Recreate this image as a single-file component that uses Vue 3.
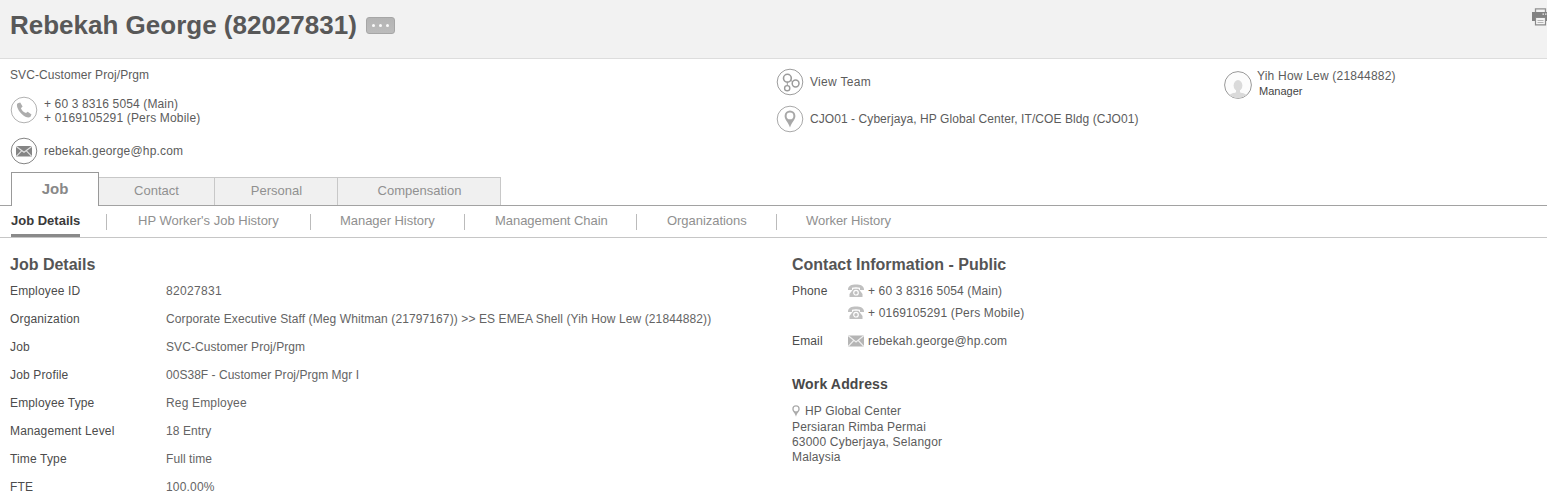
<script setup>
const tabs = [
  { label: 'Job', cls: 'active' },
  { label: 'Contact', cls: 'contact' },
  { label: 'Personal', cls: 'personal' },
  { label: 'Compensation', cls: 'compensation' },
]
const subtabs = [
  { label: 'Job Details', cls: 'current' },
  { label: "HP Worker's Job History", cls: 'st1' },
  { label: 'Manager History', cls: 'st2' },
  { label: 'Management Chain', cls: 'st3' },
  { label: 'Organizations', cls: 'st4' },
  { label: 'Worker History', cls: 'st5' },
]
const details = [
  { label: 'Employee ID', value: '82027831', cls: 'digits' },
  { label: 'Organization', value: 'Corporate Executive Staff (Meg Whitman (21797167)) >> ES EMEA Shell (Yih How Lew (21844882))', cls: 'org' },
  { label: 'Job', value: 'SVC-Customer Proj/Prgm', cls: 'tight' },
  { label: 'Job Profile', value: '00S38F - Customer Proj/Prgm Mgr I', cls: 'profile' },
  { label: 'Employee Type', value: 'Reg Employee', cls: 'mid' },
  { label: 'Management Level', value: '18 Entry', cls: 'tight' },
  { label: 'Time Type', value: 'Full time', cls: 'tight' },
  { label: 'FTE', value: '100.00%', cls: 'mid' },
]
</script>

<template>
  <div class="page">
    <header class="header">
      <h1>Rebekah George (82027831)</h1>
      <button class="more" aria-label="More actions"><i></i><i></i><i></i></button>
      <svg class="print" width="15" height="18" viewBox="0 0 15 18">
        <path d="M3.500 5V.800h10V5" fill="#f2f2f2" stroke="#909090" stroke-width="1.300" />
        <path d="M0 4h15v9H0z" fill="#838383" />
        <path d="M10.500 5.500h1.500v1.300h-1.500zM13 5.500h1.500v1.300H13z" fill="#eee" />
        <path d="M3.500 9.500h10v7.300h-10z" fill="#f5f5f5" stroke="#8a8a8a" stroke-width="1.200" />
        <path d="M5.500 12.500h6M5.500 14.500h6" stroke="#b5b5b5" />
      </svg>
    </header>

    <section class="summary">
      <div class="person">
        <div class="role tight">SVC-Customer Proj/Prgm</div>
        <div class="item phones">
          <svg class="round" width="28" height="28" viewBox="0 0 28 28">
            <circle cx="14" cy="14" r="12.800" fill="#fff" stroke="#b2b2b2" />
            <path d="M7.700 7.200L10.200 6.500L12.600 10.500L10.900 12.200C11.700 14.300 13.600 16.200 16 17L17.700 15.700L21.500 18.400L20.300 20.900C18.500 22 15.300 21.300 12 18.200C8.700 15.300 6.500 10.500 7 8.200Z" fill="#adadad" />
          </svg>
          <div class="lines">
            <div class="phone-main">+ 60 3 8316 5054 (Main)</div>
            <div class="phone-mobile">+ 0169105291 (Pers Mobile)</div>
          </div>
        </div>
        <div class="item mail">
          <svg class="round" width="28" height="28" viewBox="0 0 28 28">
            <circle cx="14" cy="14" r="12.800" fill="#fff" stroke="#858585" />
            <path d="M6 9h16v10.500H6z" fill="#858585" />
            <path d="M6 9.300l8 6 8-6M6.300 19.300l5.300-5.400M21.700 19.300l-5.300-5.400" fill="none" stroke="#e2e2e2" stroke-width="1.100" />
          </svg>
          <div class="email">rebekah.george@hp.com</div>
        </div>
      </div>

      <div class="place">
        <div class="item">
          <svg class="round" width="28" height="28" viewBox="0 0 28 28">
            <circle cx="14" cy="14" r="12.800" fill="#fff" stroke="#9d9d9d" />
            <g fill="none" stroke="#9b9b9b">
              <circle cx="11.400" cy="10.200" r="3.900" stroke-width="1.600" />
              <circle cx="19.600" cy="15.500" r="3.400" stroke-width="1.500" />
              <circle cx="11.200" cy="20.200" r="2.600" stroke-width="1.400" />
              <path d="M14.700 12.400l2 1.300M11.300 14.500v3" />
            </g>
          </svg>
          <div class="view-team">View Team</div>
        </div>
        <div class="item location">
          <svg class="round" width="28" height="28" viewBox="0 0 28 28">
            <circle cx="14" cy="14" r="12.800" fill="#fff" stroke="#a9a9a9" />
            <path fill-rule="evenodd" d="M14 5.500a5.400 5.400 0 0 1 5.400 5.400C19.400 14.500 16 16.500 14 22.500C12 16.500 8.600 14.500 8.600 10.900A5.400 5.400 0 0 1 14 5.500zM14 7.500a3.400 3.400 0 1 0 0 6.800a3.400 3.400 0 0 0 0-6.800z" fill="#a8a8a8" />
          </svg>
          <div class="site">CJO01 - Cyberjaya, HP Global Center, IT/COE Bldg (CJO01)</div>
        </div>
      </div>

      <div class="manager">
        <svg width="28" height="28" viewBox="0 0 28 28">
          <circle cx="14" cy="14" r="13.400" fill="#fcfcfc" stroke="#999" />
          <path d="M5.500 24C8 21.700 11 22 12 21.200h4c1 .8 4 .5 6.500 2.800A13 13 0 0 1 5.500 24z" fill="#dadada" />
          <ellipse cx="14" cy="14.500" rx="4.400" ry="5.400" fill="#dadada" />
          <path d="M12 18h4v4h-4z" fill="#dadada" />
        </svg>
        <div>
          <div class="mgr-name">Yih How Lew (21844882)</div>
          <div class="mgr-role">Manager</div>
        </div>
      </div>
    </section>

    <nav class="tabs">
      <div v-for="t in tabs" :key="t.label" class="tab" :class="t.cls">{{ t.label }}</div>
    </nav>
    <nav class="subtabs">
      <div v-for="s in subtabs" :key="s.label" class="subtab" :class="s.cls"><span>{{ s.label }}</span></div>
    </nav>

    <main class="content">
      <section class="details">
        <h2>Job Details</h2>
        <dl>
          <div v-for="d in details" :key="d.label" class="row">
            <dt>{{ d.label }}</dt>
            <dd><span :class="d.cls">{{ d.value }}</span></dd>
          </div>
        </dl>
      </section>

      <section class="contact-info">
        <h2>Contact Information - Public</h2>
        <div class="cline">
          <span class="clabel">Phone</span>
          <svg width="16" height="14" viewBox="0 0 16 14">
            <path d="M0 5C.3 1.800 3.500.5 8 .5S15.700 1.800 16 5v1h-4V3.800C10 3 6 3 4 3.800V6H0z" fill="#c0c0c0" />
            <path d="M5.500 4.700h5L14.500 10v3h-13v-3z" fill="#c0c0c0" />
            <circle cx="8" cy="8.700" r="2.300" fill="#c0c0c0" stroke="#fff" stroke-width="1.200" />
          </svg>
          <span class="phone-main">+ 60 3 8316 5054 (Main)</span>
        </div>
        <div class="cline">
          <span class="clabel"></span>
          <svg width="16" height="14" viewBox="0 0 16 14">
            <path d="M0 5C.3 1.800 3.500.5 8 .5S15.700 1.800 16 5v1h-4V3.800C10 3 6 3 4 3.800V6H0z" fill="#c0c0c0" />
            <path d="M5.500 4.700h5L14.500 10v3h-13v-3z" fill="#c0c0c0" />
            <circle cx="8" cy="8.700" r="2.300" fill="#c0c0c0" stroke="#fff" stroke-width="1.200" />
          </svg>
          <span class="phone-mobile">+ 0169105291 (Pers Mobile)</span>
        </div>
        <div class="cline cmail">
          <span class="clabel">Email</span>
          <svg width="16" height="14" viewBox="0 0 16 14">
            <path d="M0 1.500h16v11H0z" fill="#b5b5b5" />
            <path d="M0 1.500l8 6.500 8-6.500M0 12.500l5.700-6M16 12.500l-5.700-6" fill="none" stroke="#f0f0f0" stroke-width="1.100" />
          </svg>
          <span class="email">rebekah.george@hp.com</span>
        </div>
        <h3>Work Address</h3>
        <address>
          <div class="first">
            <svg width="8" height="12" viewBox="0 0 8 12">
              <path fill-rule="evenodd" d="M4 .3A3.700 3.700 0 0 1 7.700 4C7.700 6.500 5.200 7.500 4 11.700C2.800 7.500.3 6.500.3 4A3.700 3.700 0 0 1 4 .3zM4 1.600a2.400 2.400 0 1 0 0 4.800a2.400 2.400 0 0 0 0-4.800z" fill="#ababab" />
            </svg>
            <span>HP Global Center</span>
          </div>
          <div>Persiaran Rimba Permai</div>
          <div class="city">63000 Cyberjaya, Selangor</div>
          <div>Malaysia</div>
        </address>
      </section>
    </main>
  </div>
</template>

<style>
body { background: #fff; }
</style>

<style scoped>
.page {
  width: 1547px;
  height: 494px;
  overflow: hidden;
  background: #fff;
  color: #5c5c5c;
  font: 12px/14px "Liberation Sans", Arial, sans-serif;
  letter-spacing: 0.15px;
  white-space: nowrap;
}
.tight { letter-spacing: 0.08px; }
.mid { letter-spacing: 0.17px; }
.digits { letter-spacing: 0.34px; }
.org { letter-spacing: 0.105px; }
.profile { letter-spacing: 0.03px; }
.email { letter-spacing: 0.17px; }
.phone-main { letter-spacing: 0.13px; }
.phone-mobile { letter-spacing: 0.18px; }
.view-team { letter-spacing: 0.3px; }
.site { letter-spacing: 0.07px; }
.city { letter-spacing: 0.19px; }
svg { display: block; flex: none; }

.header {
  box-sizing: border-box;
  height: 59px;
  display: flex;
  align-items: flex-start;
  padding-left: 10px;
  background: #f2f2f2;
  border-bottom: 1px solid #ddd;
}
h1 {
  margin: 9px 0 0;
  width: 356px;
  font-size: 26px;
  line-height: 32px;
  letter-spacing: 0;
  color: #585858;
}
.more {
  box-sizing: border-box;
  display: flex;
  align-items: center;
  justify-content: center;
  gap: 4px;
  width: 29px;
  height: 17px;
  margin: 17px 0 0;
  padding: 0;
  border: 1px solid #a6a6a6;
  border-radius: 3px;
  background: linear-gradient(#b4b4b4, #bcbcbc);
}
.more i { width: 3px; height: 3px; border-radius: 50%; background: #fafafa; }
.print { margin: 8px 0 0 auto; }

.summary { display: flex; height: 113px; }
.person { width: 766px; padding: 9px 0 0 10px; }
.item { display: flex; align-items: center; height: 28px; }
.item .round { margin-right: 6px; }
.phones { margin-top: 14px; }
.lines { padding-top: 2px; }
.mail { margin-top: 13px; }
.place { width: 447px; padding-top: 9px; }
.location { margin-top: 9px; }
.manager { display: flex; padding-top: 10px; }
.manager svg { margin: 2px 5px 0 1px; }
.mgr-role { margin: 1px 0 0 2px; font-size: 11px; letter-spacing: 0; color: #444; }
.mgr-name { letter-spacing: 0.2px; }

.tabs {
  display: flex;
  align-items: flex-end;
  box-sizing: border-box;
  height: 34px;
  padding-left: 11px;
  border-bottom: 1px solid #a2a2a2;
}
.tab {
  box-sizing: border-box;
  height: 28px;
  border: 1px solid #c8c8c8;
  border-left: 0;
  border-bottom: 0;
  background: #f0f0f0;
  color: #909090;
  font-size: 13px;
  line-height: 25px;
  letter-spacing: 0;
  text-align: center;
}
.tab.active {
  width: 88px;
  height: 34px;
  margin-bottom: -1px;
  border: 1px solid #999;
  border-bottom: 0;
  background: #fff;
  color: #888;
  font-size: 15px;
  font-weight: bold;
  line-height: 32px;
}
.contact { width: 116px; }
.personal { width: 123px; padding-left: 1px; }
.compensation { width: 163px; padding-left: 1px; }

.subtabs {
  box-sizing: border-box;
  display: flex;
  height: 32px;
  padding-left: 11px;
  border-bottom: 1px solid #c6c6c6;
}
.subtab {
  box-sizing: border-box;
  display: flex;
  height: 31px;
  font-size: 13px;
  line-height: 29px;
  letter-spacing: 0;
  color: #909090;
}
.subtab:not(.current)::before { content: ""; width: 1px; height: 16px; margin: 8px 30px 0 0; background: #bbb; }
.current { width: 95px; font-weight: bold; color: #3a3a3a; }
.current span { box-sizing: border-box; height: 31px; border-bottom: 3px solid #8a8a8a; }
.subtab.st1::before { margin-right: 31px; }
.st1 { width: 204px; }
.subtab.st2::before, .subtab.st5::before { margin-right: 29px; }
.st2 { width: 154px; letter-spacing: -0.05px; }
.st3 { width: 172px; letter-spacing: -0.05px; }
.st4 { width: 140px; letter-spacing: -0.04px; }
.st5 { letter-spacing: -0.05px; }

.content { display: flex; }
.details { width: 782px; padding-left: 10px; }
h2 { margin: 17px 0 9px; font-size: 16px; line-height: 20px; letter-spacing: 0; color: #555; }
.details, .contact-info { box-sizing: border-box; }
.contact-info { margin-left: 10px; }
dl { margin: 0; }
.row { display: flex; height: 28px; }
dt { width: 156px; }
dt, .clabel { color: #4c4c4c; }
dd { margin: 0; color: #646464; }
.cline { display: flex; align-items: center; height: 14px; margin-bottom: 8px; }
.clabel { width: 56px; }
.cline svg { margin-right: 4px; }
.cmail { margin-top: 14px; margin-bottom: 0; }
h3 { margin: 27px 0 11px; font-size: 14px; line-height: 18px; color: #484848; }
address { font-style: normal; line-height: 15px; }
.first { display: flex; height: 16px; }
.first svg { margin: 1px 5px 0 0; }
</style>
